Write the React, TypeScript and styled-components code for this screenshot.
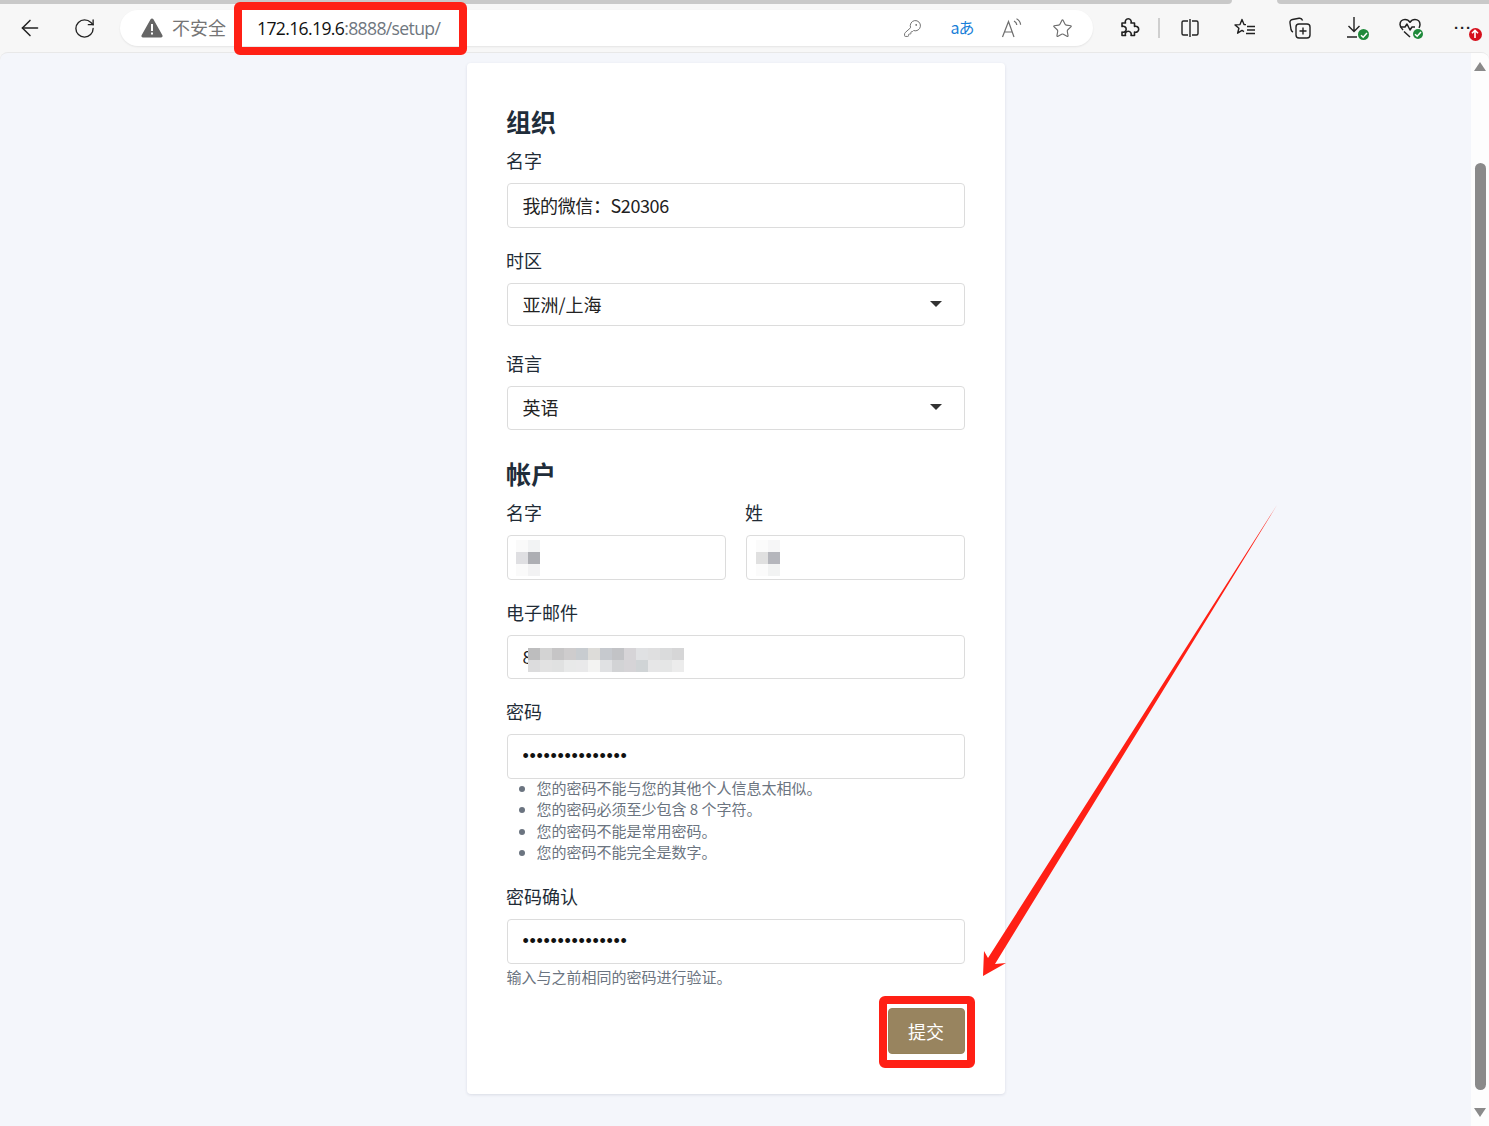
import React from "react";
import styled, { createGlobalStyle } from "styled-components";
import { ArrowLeft, RotateCw, KeyRound, Star } from "lucide-react";

const RED = "#ff2015";
const UI_FONT = `"Noto Sans CJK SC", "Open Sans", sans-serif`;

const GlobalStyle = createGlobalStyle`
  html, body {
    margin: 0;
    padding: 0;
    height: 100%;
    overflow: hidden;
    background: #f7f7f7;
  }
  * { box-sizing: border-box; }
`;

const Page = styled.div`
  position: relative;
  width: 1489px;
  height: 1126px;
  overflow: hidden;
  display: flex;
  flex-direction: column;
  font-family: ${UI_FONT};
`;

// barra do navegador
const TabStrip = styled.div`
  height: 4px;
  flex: none;
  display: flex;
  justify-content: space-between;
`;

const TabEdge = styled.div<{ $w: number; $side: "left" | "right" }>`
  width: ${(p) => p.$w}px;
  background: #c9c9c9;
  border-bottom-${(p) => (p.$side === "left" ? "right" : "left")}-radius: 4px;
`;

const Toolbar = styled.div`
  height: 48px;
  flex: none;
  display: flex;
  align-items: flex-start;
  padding: 6px 0 0 2px;
  background: #f7f7f7;
`;

const ToolCell = styled.div<{ $w?: number }>`
  width: ${(p) => p.$w ?? 55}px;
  height: 36px;
  flex: none;
  position: relative;
  display: flex;
  align-items: center;
  justify-content: center;
  color: #222;
`;

const AddressPill = styled.div`
  width: 973px;
  height: 36px;
  margin: 0 8px;
  flex: none;
  display: flex;
  align-items: center;
  padding-left: 21px;
  background: #fff;
  border-radius: 18px;
  box-shadow: 0 1px 2px rgba(0, 0, 0, 0.08);
`;

const Insecure = styled.span`
  margin-left: 9px;
  width: 85px;
  padding-bottom: 3px;
  font-size: 18px;
  color: #757575;
  flex: none;
`;

const Url = styled.span`
  position: relative;
  height: 36px;
  display: flex;
  align-items: center;
  width: 184px;
  flex: none;
  white-space: nowrap;
  font-family: "Open Sans", sans-serif;
  font-size: 17.6px;
  letter-spacing: -0.65px;
  color: #6f7780;

  b {
    font-weight: 400;
    color: #111;
  }

  &::after {
    content: "";
    position: absolute;
    left: -23px;
    right: -26px;
    top: -8px;
    bottom: -9px;
    border: 8px solid ${RED};
    border-radius: 6px;
  }
`;

const PillIcons = styled.div`
  margin-left: auto;
  padding-right: 6px;
  display: flex;
  align-items: center;
`;

const PillIcon = styled.div`
  width: 50px;
  display: flex;
  justify-content: center;
  color: #6d6d6d;
`;

const Translate = styled.span`
  padding-bottom: 3px;
  font-family: "Noto Sans CJK JP", sans-serif;
  font-size: 16px;
  letter-spacing: -1px;
  color: #1a7fd8;
`;

const ToolDivider = styled.div`
  width: 2px;
  height: 20px;
  margin: 8px 2px 0 2px;
  flex: none;
  background: #cfcfcf;
`;

const Badge = styled.span<{ $bg: string; $size: number; $right: number; $top: number }>`
  position: absolute;
  right: ${(p) => p.$right}px;
  top: ${(p) => p.$top}px;
  width: ${(p) => p.$size}px;
  height: ${(p) => p.$size}px;
  border-radius: 50%;
  background: ${(p) => p.$bg};
  display: flex;
  align-items: center;
  justify-content: center;
`;

// área da página
const Viewport = styled.div`
  flex: 1;
  display: flex;
  min-height: 0;
  background: #f4f6fb;
  border-top: 1px solid #e8e8e8;
  border-top-left-radius: 8px;
  border-top-right-radius: 8px;
  overflow: hidden;
`;

const Main = styled.main`
  flex: 1;
  padding-top: 10px;
  display: flex;
  justify-content: center;
`;

const ScrollBar = styled.div`
  width: 18px;
  flex: none;
  background: #fdfdfd;
  display: flex;
  flex-direction: column;
  align-items: center;
  padding: 9px 0 0 0;
`;

const ScrollArrow = styled.div<{ $down?: boolean }>`
  width: 0;
  height: 0;
  flex: none;
  border-left: 6.5px solid transparent;
  border-right: 6.5px solid transparent;
  ${(p) => (p.$down ? "border-top: 9px solid #8a8a8a;" : "border-bottom: 9px solid #8a8a8a;")}
`;

const ScrollThumb = styled.div`
  width: 11px;
  height: 927px;
  margin: 92px 0 18px;
  flex: none;
  background: #8a8a8a;
  border-radius: 6px;
`;

const Card = styled.form`
  width: 538px;
  height: 1031px;
  padding: 40px;
  background: #fff;
  border-radius: 4px;
  box-shadow: 0 1px 3px rgba(30, 40, 70, 0.12);
`;

const Heading = styled.h2<{ $mt?: number }>`
  margin: ${(p) => p.$mt ?? 0}px 0 9px -0.5px;
  font-size: 25px;
  line-height: 36px;
  font-weight: 700;
  color: #1f2d3a;
`;

const Field = styled.div<{ $mb?: number; $mt?: number }>`
  margin-top: ${(p) => p.$mt ?? 0}px;
  margin-bottom: ${(p) => p.$mb ?? 20}px;
`;

const Label = styled.label`
  display: block;
  margin: 0 0 10px -0.5px;
  font-size: 18px;
  line-height: 25px;
  color: #212b36;
`;

const TwoCols = styled.div`
  display: grid;
  grid-template-columns: 219px 219px;
  gap: 20px;
`;

const InputWrap = styled.div`
  position: relative;
`;

const Input = styled.input<{ $h?: number; $tight?: boolean }>`
  display: block;
  width: 100%;
  height: ${(p) => p.$h ?? 45}px;
  padding: 0 15px 2px;
  border: 1px solid #dcdcdc;
  border-radius: 4px;
  background: #fff;
  font-family: ${UI_FONT};
  font-size: 18px;
  letter-spacing: ${(p) => (p.$tight ? "-0.4px" : "0")};
  color: #222;
  outline: none;

  &[type="password"] {
    padding: 0 15px;
    font-family: "Liberation Sans", sans-serif;
    letter-spacing: 0.7px;
    color: #111;
  }
`;

const SelectWrap = styled.div`
  position: relative;

  &::after {
    content: "";
    position: absolute;
    right: 23px;
    top: 18px;
    border-left: 6.5px solid transparent;
    border-right: 6.5px solid transparent;
    border-top: 6px solid #333;
  }
`;

const Select = styled.select<{ $h: number }>`
  display: block;
  width: 100%;
  height: ${(p) => p.$h}px;
  padding: 0 15px 2px;
  appearance: none;
  border: 1px solid #dcdcdc;
  border-radius: 4px;
  background: #fff;
  font-family: ${UI_FONT};
  font-size: 18px;
  color: #222;
  outline: none;
`;

// quadrados que escondem os dados pessoais
const Patch = styled.div<{ $left: number; $top: number }>`
  position: absolute;
  left: ${(p) => p.$left}px;
  top: ${(p) => p.$top}px;
  display: flex;
  flex-direction: column;
  pointer-events: none;
`;

const PatchRow = styled.div`
  display: flex;
`;

const PatchCell = styled.span<{ $c: string }>`
  width: 12px;
  height: 12px;
  background: ${(p) => p.$c};
`;

const Hints = styled.ul`
  margin: -2px 0 0;
  padding: 0 0 0 30px;
  font-size: 15px;
  line-height: 21.3px;
  color: #6b7480;
`;

const Help = styled.div`
  margin: 2px 0 0;
  font-size: 15px;
  line-height: 21px;
  color: #6b7480;
`;

const Actions = styled.div`
  display: flex;
  justify-content: flex-end;
  margin-top: 21px;
`;

const SubmitWrap = styled.div`
  position: relative;

  &::after {
    content: "";
    position: absolute;
    left: -9px;
    right: -10px;
    top: -12px;
    bottom: -14px;
    border: 8px solid ${RED};
    border-radius: 6px;
    pointer-events: none;
  }
`;

const Submit = styled.button`
  display: block;
  width: 77px;
  height: 46px;
  border: 1px solid #958159;
  border-radius: 4px;
  background: #98845f;
  color: #fff;
  font-family: ${UI_FONT};
  font-size: 18px;
`;

const ArrowOverlay = styled.svg`
  position: absolute;
  left: 0;
  top: 0;
  pointer-events: none;
`;

const Dots = styled.span`
  font-family: "Liberation Sans", sans-serif;
  font-size: 15px;
  letter-spacing: 1px;
  font-weight: 700;
  line-height: 1;
  margin-top: -2px;
`;

const firstNameCells = [
  ["#fafafa", "#f2f3f4"],
  ["#dfdfe2", "#adaeb3"],
  ["#fafafa", "#f2f2f3"],
];
const lastNameCells = [
  ["#fbfbfb", "#f6f6f7"],
  ["#e0e0e0", "#b5b6bc"],
  ["#fbfbfb", "#f2f3f3"],
];
const emailCells = [
  ["#bdbdbe", "#d3d3d3", "#c6c5c6", "#cecccd", "#c8ccd0", "#dddcd9", "#c6c9ce", "#c2c3c6", "#d6d4d7", "#e0e1e3", "#dfdfe0", "#dadbdc", "#d6d6d7"],
  ["#dcdcdd", "#e2e2e2", "#e0e1e1", "#e8e9e9", "#e9e9ea", "#f3f3f2", "#e0e1e3", "#d2d3d5", "#d6d4d7", "#d0d4d6", "#e6e6e7", "#e5e6e6", "#ececec"],
];

const Pixels = ({ rows, left, top }: { rows: string[][]; left: number; top: number }) => (
  <Patch $left={left} $top={top}>
    {rows.map((row, i) => (
      <PatchRow key={i}>
        {row.map((c, j) => (
          <PatchCell key={j} $c={c} />
        ))}
      </PatchRow>
    ))}
  </Patch>
);

const Check = () => (
  <svg width="10" height="10" viewBox="0 0 10 10" fill="none" stroke="#fff" strokeWidth="1.5">
    <path d="M2 5.2 4.2 7.2 8 3" />
  </svg>
);

const WarningIcon = () => (
  <svg width="22" height="20" viewBox="0 0 22 20">
    <path d="M11 0.5c.6 0 1.1.3 1.4.8l9 16c.6 1-.1 2.2-1.4 2.2H2c-1.3 0-2-1.2-1.4-2.2l9-16c.3-.5.8-.8 1.4-.8z" fill="#666" />
    <rect x="10" y="6" width="2" height="7" fill="#fff" />
    <rect x="10" y="14.5" width="2" height="2" fill="#fff" />
  </svg>
);

const ReadAloudIcon = () => (
  <svg width="22" height="20" viewBox="0 0 22 20" fill="none" stroke="#6d6d6d" strokeWidth="1.2">
    <path d="M1.5 19 7.5 3.5 13 19M3.500 14h8" />
    <path d="M13 3c1.600.8 2.600 2.200 2.800 4M15.500 0.800c2.400 1.200 3.900 3.400 4.100 6" />
  </svg>
);

const PuzzleIcon = () => (
  <svg width="22" height="22" viewBox="0 0 22 22" fill="none" stroke="#222" strokeWidth="1.6" strokeLinejoin="round">
    <path d="M4 6h3.500a3 3 0 1 1 5.500 0H16.500v3.500a3 3 0 1 1 0 5.500V18.500H13a3 3 0 1 0-5.500 0H4V15a3 3 0 1 0 0-5.500z" />
  </svg>
);

const SplitIcon = () => (
  <svg width="20" height="20" viewBox="0 0 20 20" fill="none" stroke="#222" strokeWidth="1.4">
    <path d="M8 3H3.500A1.500 1.500 0 0 0 2 4.500v11A1.500 1.500 0 0 0 3.500 17H8M12 3h4.500A1.500 1.500 0 0 1 18 4.500v11a1.500 1.500 0 0 1-1.500 1.500H12M10 1v18" />
  </svg>
);

const FavoritesIcon = () => (
  <svg width="22" height="20" viewBox="0 0 22 20" fill="none" stroke="#222" strokeWidth="1.4" strokeLinejoin="round">
    <path d="M12 6.600H10L8 1.500 6 6.600 1 6.900l3.900 3.300-1.300 5 4.400-2.800 2 1.300" />
    <path d="M13 8.500h8M13 12h8M12 15.500h9" />
  </svg>
);

const CollectionsIcon = () => (
  <svg width="22" height="22" viewBox="0 0 22 22" fill="none" stroke="#222" strokeWidth="1.4">
    <rect x="7" y="7" width="14" height="14" rx="3" />
    <path d="M14 10.500v7M10.500 14h7" />
    <path d="M4 15c-1.200-.5-1.800-1.400-2-2.500L1 6c-.3-1.800.7-3.200 2.500-3.500L10 1.300c1.700-.3 3 .5 3.600 2.200" />
  </svg>
);

const DownloadIcon = () => (
  <svg width="20" height="24" viewBox="0 0 20 24" fill="none" stroke="#222" strokeWidth="1.4">
    <path d="M9 1v14M3.500 10 9 15.500 14.500 10M2 21h10" />
  </svg>
);

const HealthIcon = () => (
  <svg width="22" height="20" viewBox="0 0 22 20" fill="none" stroke="#222" strokeWidth="1.5" strokeLinejoin="round">
    <path d="M4 12C2 10 1 8.500 1 6.500 1 3.500 3.200 1.500 6 1.500c2 0 3.800 1 5 2.800 1.200-1.800 3-2.800 5-2.800 2.800 0 5 2 5 5 0 1.200-.4 2.300-1 3.300" />
    <path d="M1.500 9H6l2-3 3 6 2-3h3M5 13.500l6 5.500" />
  </svg>
);

const UpArrow = () => (
  <svg width="10" height="10" viewBox="0 0 10 10" fill="none" stroke="#fff" strokeWidth="1.6">
    <path d="M5 9V1.500M2 4.300 5 1.300 8 4.300" />
  </svg>
);

const App = () => {
  return (
    <Page>
      <GlobalStyle />
      <TabStrip>
        <TabEdge $w={1232} $side="left" />
        <TabEdge $w={212} $side="right" />
      </TabStrip>
      <Toolbar>
        <ToolCell>
          <ArrowLeft size={26} strokeWidth={1.4} />
        </ToolCell>
        <ToolCell>
          <RotateCw size={23} strokeWidth={1.4} />
        </ToolCell>
        <AddressPill>
          <WarningIcon />
          <Insecure>不安全</Insecure>
          <Url>
            <span>
              <b>172.16.19.6</b>:8888/setup/
            </span>
          </Url>
          <PillIcons>
            <PillIcon>
              <KeyRound size={19} strokeWidth={1.2} />
            </PillIcon>
            <PillIcon>
              <Translate>aあ</Translate>
            </PillIcon>
            <PillIcon>
              <ReadAloudIcon />
            </PillIcon>
            <PillIcon>
              <Star size={21} strokeWidth={1.3} />
            </PillIcon>
          </PillIcons>
        </AddressPill>
        <ToolCell>
          <PuzzleIcon />
        </ToolCell>
        <ToolDivider />
        <ToolCell>
          <SplitIcon />
        </ToolCell>
        <ToolCell>
          <FavoritesIcon />
        </ToolCell>
        <ToolCell>
          <CollectionsIcon />
        </ToolCell>
        <ToolCell>
          <DownloadIcon />
          <Badge $bg="#1f8a3b" $size={11} $right={13} $top={19}>
            <Check />
          </Badge>
        </ToolCell>
        <ToolCell>
          <HealthIcon />
          <Badge $bg="#1f8a3b" $size={10} $right={14} $top={19}>
            <Check />
          </Badge>
        </ToolCell>
        <ToolCell $w={52}>
          <Dots>···</Dots>
          <Badge $bg="#d6101c" $size={13} $right={7.5} $top={17.5}>
            <UpArrow />
          </Badge>
        </ToolCell>
      </Toolbar>
      <Viewport>
        <Main>
          <Card onSubmit={(e) => e.preventDefault()}>
            <Heading>组织</Heading>
            <Field>
              <Label>名字</Label>
              <Input $tight readOnly value="我的微信：S20306" />
            </Field>
            <Field $mb={25}>
              <Label>时区</Label>
              <SelectWrap>
                <Select $h={43} defaultValue="sh">
                  <option value="sh">亚洲/上海</option>
                </Select>
              </SelectWrap>
            </Field>
            <Field $mb={25}>
              <Label>语言</Label>
              <SelectWrap>
                <Select $h={44} defaultValue="en">
                  <option value="en">英语</option>
                </Select>
              </SelectWrap>
            </Field>

            <Heading>帐户</Heading>
            <TwoCols>
              <Field>
                <Label>名字</Label>
                <InputWrap>
                  <Input readOnly />
                  <Pixels rows={firstNameCells} left={9} top={5} />
                </InputWrap>
              </Field>
              <Field>
                <Label>姓</Label>
                <InputWrap>
                  <Input readOnly />
                  <Pixels rows={lastNameCells} left={10} top={5} />
                </InputWrap>
              </Field>
            </TwoCols>
            <Field>
              <Label>电子邮件</Label>
              <InputWrap>
                <Input $h={44} readOnly value="8" />
                <Pixels rows={emailCells} left={21} top={13} />
              </InputWrap>
            </Field>
            <Field $mb={0}>
              <Label>密码</Label>
              <Input type="password" readOnly value="abcdefghijklmno" />
              <Hints>
                <li>您的密码不能与您的其他个人信息太相似。</li>
                <li>您的密码必须至少包含 8 个字符。</li>
                <li>您的密码不能是常用密码。</li>
                <li>您的密码不能完全是数字。</li>
              </Hints>
            </Field>
            <Field $mb={0} $mt={22}>
              <Label>密码确认</Label>
              <Input type="password" readOnly value="abcdefghijklmno" />
              <Help>输入与之前相同的密码进行验证。</Help>
            </Field>
            <Actions>
              <SubmitWrap>
                <Submit type="submit">提交</Submit>
              </SubmitWrap>
            </Actions>
          </Card>
        </Main>
        <ScrollBar>
          <ScrollArrow />
          <ScrollThumb />
          <ScrollArrow $down />
        </ScrollBar>
      </Viewport>
      <ArrowOverlay width="1489" height="1126" viewBox="0 0 1489 1126">
        <polygon points="1277,505 995,964 1006,963 983,976 984,951 988,958" fill={RED} />
      </ArrowOverlay>
    </Page>
  );
};

export default App;
